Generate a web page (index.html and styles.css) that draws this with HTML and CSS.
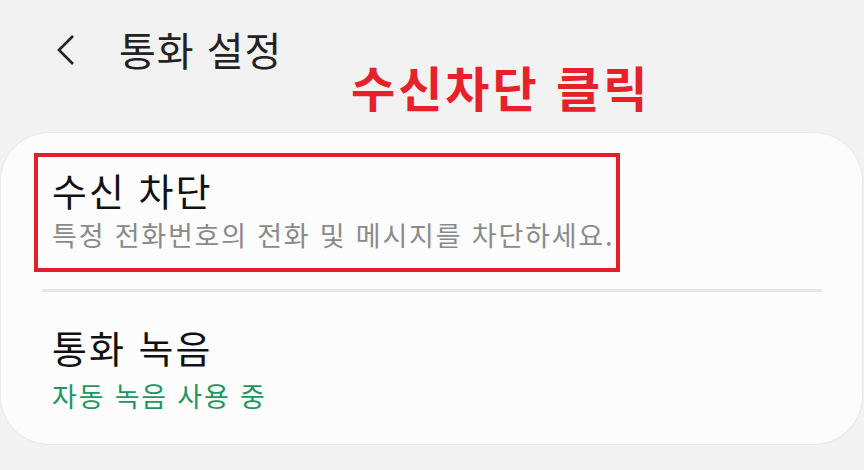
FILE: index.html
```html
<!DOCTYPE html>
<html lang="ko">
<head>
    <meta charset="UTF-8">
    <meta name="viewport" content="width=device-width, initial-scale=1.0">
    <title>통화 설정</title>
    <link rel="stylesheet" href="styles.css">
</head>
<body>
    <div class="header">
        <svg class="back" width="24" height="34" viewBox="0 0 24 34">
            <polyline points="18,2 4,16 18,30" fill="none" stroke="#222" stroke-width="2.6"/>
        </svg>
        <h1 class="title">통화 설정</h1>
        <div class="note">수신차단 클릭</div>
    </div>

    <div class="card">
        <div class="item highlight">
            <div class="item-title">수신 차단</div>
            <div class="item-sub">특정 전화번호의 전화 및 메시지를 차단하세요.</div>
        </div>
        <div class="divider"></div>
        <div class="item second">
            <div class="item-title">통화 녹음</div>
            <div class="item-sub green">자동 녹음 사용 중</div>
        </div>
    </div>
</body>
</html>
```
FILE: styles.css
```css
body {
    margin: 0;
    background-color: #f2f2f2;
    font-family: "Noto Sans CJK KR", "Noto Sans", sans-serif;
    width: 864px;
    height: 470px;
    overflow: hidden;
}
.header {
    position: relative;
    height: 133px;
    display: flex;
    align-items: flex-start;
    box-sizing: border-box;
    padding-top: 24px;
}
.back {
    margin-left: 55px;
    margin-top: 10px;
}
.title {
    margin: 0 0 0 40px;
    font-size: 40px;
    line-height: 50px;
    letter-spacing: 1px;
    font-weight: 400;
    color: #222;
}
.note {
    position: absolute;
    left: 351px;
    top: 58px;
    font-size: 48px;
    line-height: 56px;
    letter-spacing: 3px;
    font-weight: 700;
    color: #e8202a;
}
.card {
    margin: 0 2px 0 1px;
    background-color: #fcfcfc;
    border-radius: 48px;
    box-shadow: 0 0 2px rgba(0, 0, 0, 0.12);
    padding: 20px 0 28px 0;
}
.item-title {
    font-size: 38px;
    line-height: 44px;
    letter-spacing: 2px;
    color: #111;
}
.item-sub {
    font-size: 27px;
    line-height: 40px;
    letter-spacing: 1.8px;
    color: #8a8a8a;
}
.highlight {
    display: inline-block;
    margin-left: 33px;
    border: 4px solid #e3202a;
    padding: 11px 2px 13px 14px;
}
.highlight .item-sub {
    margin-top: 3px;
}
.divider {
    height: 3px;
    background-color: #e6e6e6;
    margin: 17px 40px 0 41px;
}
.second {
    padding: 33px 0 0 51px;
}
.second .item-sub {
    margin-top: 7px;
}
.green {
    color: #1d9760;
}
```
